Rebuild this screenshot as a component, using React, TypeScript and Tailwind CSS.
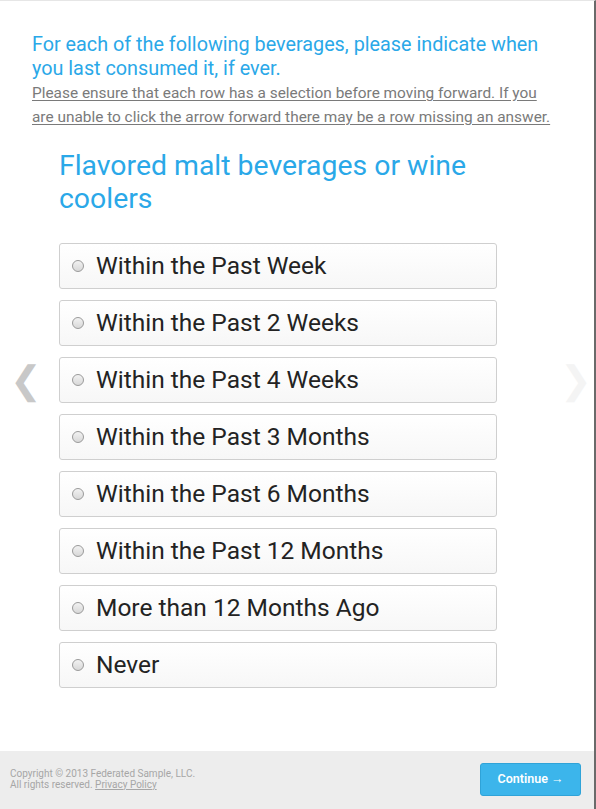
const options = [
  "Within the Past Week",
  "Within the Past 2 Weeks",
  "Within the Past 4 Weeks",
  "Within the Past 3 Months",
  "Within the Past 6 Months",
  "Within the Past 12 Months",
  "More than 12 Months Ago",
  "Never",
]

export default function App() {
  return (
    <div
      className="w-[596px] h-[809px] flex flex-col bg-white border-t border-[#e6e6e6] border-r-2 border-r-[#6a6a6a] overflow-hidden"
      style={{ fontFamily: "Roboto, 'Liberation Sans', sans-serif" }}
    >
      <main className="relative flex-1 pt-[32px]">
        {/* nav arrows */}
        <div className="absolute left-[10px] top-[360px] text-[38px] leading-none text-[#c8c8c8] select-none">
          ❮
        </div>
        <div className="absolute left-[560px] top-[360px] text-[38px] leading-none text-[#f4f4f4] select-none">
          ❯
        </div>

        <div className="pl-[32px] pr-[40px]">
          <h1 className="text-[19.8px] leading-[24px] text-[#2aa8e8]">
            For each of the following beverages, please indicate when you last consumed it, if ever.
          </h1>
          <p className="text-[15.4px] leading-[24px] text-[#7a7a7a] underline underline-offset-2">
            Please ensure that each row has a selection before moving forward. If you are unable to click the arrow forward there may be a row missing an answer.
          </p>
        </div>

        <div className="pl-[59px] pr-[97px] mt-[20px]">
          <h2 className="text-[28.4px] leading-[33px] text-[#2aa8e8] pr-[10px]">
            Flavored malt beverages or wine coolers
          </h2>
          <div className="mt-[28px] flex flex-col gap-[11px]">
            {options.map((o) => (
              <label
                key={o}
                className="h-[46px] flex items-center gap-[12px] pl-[12px] rounded-[3px] border border-[#cfcfcf] bg-gradient-to-b from-white to-[#f7f7f7] cursor-pointer"
              >
                <span className="w-[12px] h-[12px] rounded-full border border-[#9a9a9a] bg-gradient-to-b from-[#f2f2f2] to-[#d8d8d8]" />
                <span className="text-[24.5px] text-[#232323]">{o}</span>
              </label>
            ))}
          </div>
        </div>
      </main>

      <footer className="h-[58px] bg-[#ededed] flex items-center justify-between pl-[10px] pr-[13px]">
        <div className="text-[10px] leading-[11px] text-[#a6a6a6] -mt-[3px]">
          <div>Copyright © 2013 Federated Sample, LLC.</div>
          <div>
            All rights reserved. <span className="underline">Privacy Policy</span>
          </div>
        </div>
        <button className="w-[101px] h-[33px] rounded-[3px] bg-[#3cb5eb] border border-[#2fa3d8] text-white text-[12.5px] font-semibold mb-[2px]">
          Continue →
        </button>
      </footer>
    </div>
  )
}
